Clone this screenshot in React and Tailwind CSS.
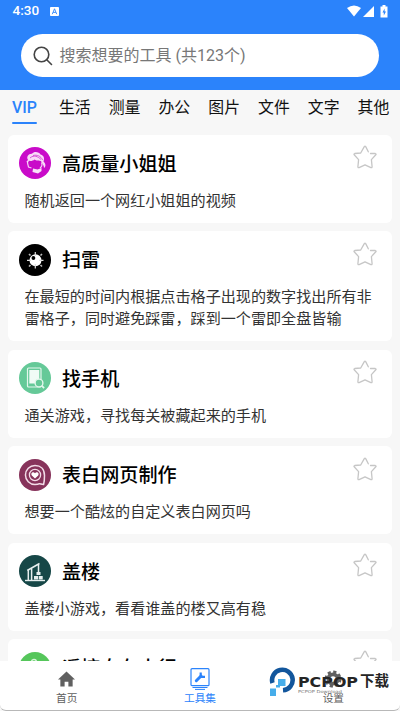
import React from "react";

const CJK = "font-['Roboto','Noto_Sans_CJK_SC',sans-serif]";

const tabs = ["VIP", "生活", "测量", "办公", "图片", "文件", "文字", "其他"];

function Portrait() {
  return (
    <svg viewBox="0 0 32 32" className="size-8">
      <circle cx="16" cy="16" r="16" fill="#c90bc9" />
      <path d="M9 13C7 10 9.500 6.500 13 6.800C15 4 20.500 5 21.500 7.500C25.500 8.500 25.500 12 24.500 14.500C27 17 27 19.500 25 21C25 18 23 17 22 14C20 13.500 17 14 15.500 12.500C14 14 11 14.500 10 13.500L8.500 17L7.500 14.500Z" fill="#f8d9f8" />
      <path d="M8.500 16L9.500 20L12.500 21M22.500 15.500C23.500 18 22.500 20 21 21" stroke="#f6c9f6" strokeWidth="1.200" fill="none" />
      <path d="M11 11C15 7.500 19 9.500 22 12.500M14 8.500C18 7.500 22 9 23.500 13" stroke="#cf35cf" strokeWidth=".8" fill="none" />
      <path d="M14 21.500l4.500 1 4-1.500v3l-3.500 2.500-5.500-1.500z" fill="#f8e2f8" />
    </svg>
  );
}

function Mine() {
  return (
    <svg viewBox="0 0 32 32" className="size-8">
      <circle cx="16" cy="16" r="16" fill="#000" />
      <circle cx="16.500" cy="16.300" r="6" fill="#fff" />
      <path d="M16.300 8v4M16.300 20v4.500M8 16.300h4M20 16.300h4.500" stroke="#ddd" strokeWidth="1.200" />
      <path d="M10 10l1.500 1.500M21.500 11.500L23 10M10 22.500l1.500-1.500M21.500 21l1.500 1.500" stroke="#bbb" strokeWidth="1.600" />
      <circle cx="14.400" cy="14" r="1.900" fill="#000" />
    </svg>
  );
}

function PhoneSearch() {
  return (
    <svg viewBox="0 0 32 32" className="size-8">
      <circle cx="16" cy="16" r="16" fill="#65c998" />
      <rect x="8.500" y="6" width="13.500" height="19" rx="1" fill="none" stroke="#e4f7ed" strokeWidth="1.200" />
      <path d="M10.300 8h10v13.500h-10z" fill="#f1fbf6" />
      <circle cx="20" cy="21" r="3.900" fill="#65c998" stroke="#e4f7ed" strokeWidth="1.400" />
      <path d="M22.700 23.700l2.400 2.500" stroke="#e4f7ed" strokeWidth="1.700" />
    </svg>
  );
}

function Confession() {
  return (
    <svg viewBox="0 0 32 32" className="size-8">
      <circle cx="16" cy="16" r="16" fill="#87335b" />
      <path d="M25.500 16.500C25.500 10 21.500 6.500 16 6.500A9.500 9.500 0 0 0 16 25.600C18 25.600 19.500 25.300 20.500 24.700L24.600 25.600Q25.500 22 25.500 16.500Z" fill="none" stroke="#f3dce8" strokeWidth="1.500" strokeLinejoin="round" />
      <circle cx="16" cy="16" r="5.600" fill="none" stroke="#f3dce8" strokeWidth="1.300" />
      <path d="M16 19.500l-3.200-3c-1.600-2 1.300-4.500 3.200-2.300c1.900-2.200 4.800.3 3.200 2.300z" fill="#fff" />
    </svg>
  );
}

function Crane() {
  return (
    <svg viewBox="0 0 32 32" className="size-8">
      <circle cx="16" cy="16" r="16" fill="#164747" />
      <path d="M6 25.500h20" stroke="#e6eeee" strokeWidth="1.400" />
      <path d="M9.300 25V15.500M12.600 25V13.500M8.200 15.500L20.500 8.500M19.500 9v9" fill="none" stroke="#e6eeee" strokeWidth="1.500" />
      <path d="M17.500 17h4v3h-4zM15 21h4v3.500h-4zM19.700 21h4v3.500h-4z" fill="#e6eeee" />
    </svg>
  );
}

function Remote() {
  return (
    <svg viewBox="0 0 32 32" className="size-8">
      <circle cx="16" cy="16" r="16" fill="#55c65b" />
      <path d="M12.500 10a2.500 2.500 0 1 1 3 2.400V17" fill="none" stroke="#d8f5da" strokeWidth="1.500" />
    </svg>
  );
}

const tools = [
  { Icon: Portrait, title: "高质量小姐姐", text: "随机返回一个网红小姐姐的视频" },
  { Icon: Mine, title: "扫雷", text: "在最短的时间内根据点击格子出现的数字找出所有非雷格子，同时避免踩雷，踩到一个雷即全盘皆输" },
  { Icon: PhoneSearch, title: "找手机", text: "通关游戏，寻找每关被藏起来的手机" },
  { Icon: Confession, title: "表白网页制作", text: "想要一个酷炫的自定义表白网页吗" },
  { Icon: Crane, title: "盖楼", text: "盖楼小游戏，看看谁盖的楼又高有稳" },
  { Icon: Remote, title: "遥控自在小行", text: "" },
];

function Star() {
  return (
    <svg viewBox="0 0 24 24" className="size-6 shrink-0" fill="none" stroke="#c6c6c6" strokeWidth="1.300" strokeLinejoin="round" strokeLinecap="round">
      <path d="M17.500 8.500h4.800q1.400.4.300 1.500l-4.200 4.600.7 7.200q0 1.200-1.200.8L12 19.800 6.100 22.600q-1.200.400-1.200-.8l.7-7.200L1.400 10q-1-1.100.3-1.500l6-.5L11.300 1.600q.7-.9 1.400 0l2.600 5.200" />
    </svg>
  );
}

function Card({ Icon, title, text }) {
  return (
    <article className="min-h-[88px] shrink-0 rounded-md bg-white pb-[11px] pl-[16.500px] pr-4">
      <div className="flex h-[55px] items-start pt-[13px]">
        <div className="-ml-[5.500px] -mt-[.5px] shrink-0"><Icon /></div>
        <h2 className="ml-[11px] mt-[1px] flex-1 text-[19.100px] leading-8 font-medium text-black">{title}</h2>
        <div className="-mt-[2.500px] mr-[-1px]"><Star /></div>
      </div>
      <p className="w-[350px] text-[15.100px] leading-[22px] text-[#333]">{text}</p>
    </article>
  );
}

function StatusBar() {
  return (
    <div className="flex h-[22px] items-center pl-[12.500px] pr-[12.500px] text-white">
      <span className="text-[13.500px] leading-none font-medium">4:30</span>
      <svg viewBox="0 0 10 10" className="ml-[11px] size-[9px]">
        <rect width="10" height="10" rx="1" fill="#fff" />
        <path d="M2.500 8L5 2l2.500 6M3.500 6h3" stroke="#2b83fb" fill="none" />
      </svg>
      <div className="ml-auto flex items-center">
        <svg viewBox="0 0 14 12" className="h-3 w-3.5"><path d="M0 3Q7-2 14 3L7 11.500Z" fill="#fff" /></svg>
        <svg viewBox="0 0 11 11" className="ml-[2px] size-[11px]"><path d="M11 0v11H0z" fill="#fff" /></svg>
        <svg viewBox="0 0 8 13" className="ml-[6px] h-[13px] w-[8px]">
          <path d="M2.500 0h3v1.500H7.500V12.500H.5V1.500h2z" fill="#fff" />
          <path d="M4.600 3.500L2.500 7.500h1.300v3L6 6.500H4.600z" fill="#2b83fb" />
        </svg>
      </div>
    </div>
  );
}

function HomeIcon() {
  return (
    <svg viewBox="0 0 18 16" className="h-4 w-[17px]"><path d="M9 0l9 8.500h-2.500V16H11v-5H7v5H2.500V8.500H0z" fill="#606060" /></svg>
  );
}

function ToolIcon() {
  return (
    <svg viewBox="0 0 20 22" className="h-[22px] w-5" fill="none" stroke="#2b83fb">
      <rect x="1" y=".7" width="18" height="17" rx="1" strokeWidth="1.200" />
      <path d="M2.500 19.500h15M5 21.400h10" strokeWidth="1" />
      <path d="M6.300 12.700L11 8" strokeWidth="3" strokeLinecap="round" />
      <path d="M10.700 4.500v4.300h4.300" strokeWidth="2.200" />
    </svg>
  );
}

function GearIcon() {
  return (
    <svg viewBox="0 0 18 18" className="size-[18px]" fill="none" stroke="#606060">
      <circle cx="9" cy="9" r="4.700" strokeWidth="3.800" />
      <circle cx="9" cy="9" r="7.200" strokeWidth="2.600" strokeDasharray="3.200 2.455" />
    </svg>
  );
}

function Watermark() {
  return (
    <div className="absolute left-[269px] top-[667px] flex items-start">
      <svg viewBox="0 0 27 31" className="h-[31px] w-[27px]">
        <path d="M3.500 16A10.300 10.300 0 1 1 14 23.300" fill="none" stroke="#12569c" strokeWidth="4.600" />
        <path d="M9 12h7.500v7H11v1.500H7V29H1v-7.500h6V18h2z" fill="#46adea" />
      </svg>
      <div className="pt-[7px] pl-[2px] text-[#252525]">
        <div className="flex h-[15px] items-center">
          <svg viewBox="0 0 60 16" className="h-4 w-[60px] overflow-visible">
            <text x="0" y="13" textLength="60" lengthAdjust="spacingAndGlyphs" fontFamily="DejaVu Sans" fontWeight="700" fontSize="14" fill="#252525">PCPOP</text>
          </svg>
          <span className="ml-[2px] mt-[2px] text-[14.500px] leading-none font-bold">下载</span>
        </div>
        <svg viewBox="0 0 45 5" className="mt-px block h-[5px] w-[45px] overflow-visible">
          <text x="0" y="3" textLength="44" lengthAdjust="spacingAndGlyphs" fontFamily="DejaVu Sans" fontSize="4" fill="#777">PCPOP Download</text>
        </svg>
      </div>
    </div>
  );
}

export default function App() {
  return (
    <div className={`relative flex h-[711px] w-[400px] flex-col overflow-hidden bg-[#f7f7f7] ${CJK}`}>
      <header className="h-[89.500px] shrink-0 bg-[#2b83fb]">
        <StatusBar />
        <div className="mx-[21px] mt-[12px] flex h-[43px] items-center rounded-full bg-white pl-[12px]">
          <svg viewBox="0 0 20 20" className="size-5" fill="none" stroke="#444" strokeWidth="1.600" strokeLinecap="round">
            <circle cx="8.500" cy="8.500" r="7.300" /><path d="M14 14l4.500 4.500" />
          </svg>
          <span className="ml-[6.500px] mt-px text-[16px] leading-6 text-[#777]">搜索想要的工具 (共123个)</span>
        </div>
      </header>
      <nav className="flex h-[45px] shrink-0 items-start pl-3 pt-[6px]">
        {tabs.map((tab, i) => (
          <div key={tab} className={i === 0 ? "mr-[22px] flex h-[28.500px] w-[25.500px] flex-col items-center justify-between font-medium text-[#2b83fb]" : "mr-[18px] w-[31.800px] text-[#111]"}>
            <span className="text-[15.900px] leading-[24px] whitespace-nowrap">{tab}</span>
            {i === 0 && <span className="h-[2.500px] w-full shrink-0 rounded-full bg-[#2b83fb]" />}
          </div>
        ))}
      </nav>
      <main className="flex min-h-0 flex-1 flex-col gap-[8.600px] overflow-hidden pl-2 pr-[8.500px]">
        {tools.map((tool) => <Card key={tool.title} {...tool} />)}
      </main>
      <footer className="flex h-[50px] shrink-0 rounded-b-md border-b border-[#b8b8b8] bg-white text-[10.700px] leading-4 text-[#606060]">
        <div className="flex flex-1 flex-col items-center pt-[10px]"><HomeIcon /><span className="mt-1">首页</span></div>
        <div className="flex flex-1 flex-col items-center pt-[7px] text-[#2b83fb]"><ToolIcon /><span className="mt-px">工具集</span></div>
        <div className="flex flex-1 flex-col items-center pt-[9px]"><GearIcon /><span className="mt-[3px]">设置</span></div>
      </footer>
      <Watermark />
    </div>
  );
}
